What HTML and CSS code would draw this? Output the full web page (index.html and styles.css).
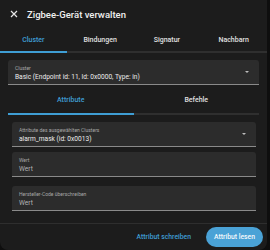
FILE: index.html
```html
<!DOCTYPE html>
<html lang="de">
<head>
    <meta charset="UTF-8">
    <meta name="viewport" content="width=device-width, initial-scale=1.0">
    <title>Zigbee-Gerät verwalten</title>
    <link rel="stylesheet" href="styles.css">
</head>
<body>
    <div class="dialog">
        <div class="kopf">
            <svg class="schliessen" width="8" height="8" viewBox="0 0 8 8">
                <path d="M1 1L7 7M7 1L1 7" stroke="#e6e6e6" stroke-width="1.2" fill="none"/>
            </svg>
            <span class="titel">Zigbee-Gerät verwalten</span>
        </div>
        <div class="tabs">
            <div class="tab aktiv">Cluster</div>
            <div class="tab">Bindungen</div>
            <div class="tab">Signatur</div>
            <div class="tab">Nachbarn</div>
        </div>
        <div class="inhalt">
            <div class="feld auswahl">
                <div class="label">Cluster</div>
                <div class="wert">Basic (Endpoint id: 11, Id: 0x0000, Type: in)</div>
                <span class="pfeil"></span>
            </div>
            <div class="tabs unter">
                <div class="tab aktiv">Attribute</div>
                <div class="tab">Befehle</div>
            </div>
            <div class="felder">
                <div class="feld auswahl">
                    <div class="label">Attribute des ausgewählten Clusters</div>
                    <div class="wert">alarm_mask (id: 0x0013)</div>
                    <span class="pfeil"></span>
                </div>
                <div class="feld">
                    <div class="label">Wert</div>
                    <div class="wert leer">Wert</div>
                </div>
                <div class="feld">
                    <div class="label">Hersteller-Code überschreiben</div>
                    <div class="wert leer">Wert</div>
                </div>
            </div>
        </div>
        <div class="aktionen">
            <button class="knopf text">Attribut schreiben</button>
            <button class="knopf voll">Attribut lesen</button>
        </div>
    </div>
</body>
</html>
```

FILE: styles.css
```css
body {
    margin: 0;
    background-color: #0e0e0e;
    font-family: Roboto, "Liberation Sans", sans-serif;
}
.dialog {
    width: 267px;
    height: 250px;
    background-color: #1c1c1c;
    border-radius: 0 0 8px 8px;
    display: flex;
    flex-direction: column;
}
.kopf {
    height: 28px;
    display: flex;
    align-items: center;
    padding: 0 0 0 10px;
}
.schliessen {
    margin-right: 9px;
}
.titel {
    color: #f0f0f0;
    font-size: 9.5px;
    font-weight: 500;
    padding-top: 1px;
}
.tabs {
    display: flex;
    height: 23px;
    border-bottom: 2px solid #2f2f2f;
}
.tab {
    flex: 1;
    display: flex;
    align-items: center;
    justify-content: center;
    font-size: 7px;
    font-weight: 500;
    color: #e0e0e0;
    margin-bottom: -2px;
    border-bottom: 2px solid transparent;
}
.tab.aktiv {
    color: #3f9ed4;
    border-bottom-color: #3f9ed4;
}
.inhalt {
    padding: 7px 8px 0 8px;
}
.feld {
    position: relative;
    height: 25px;
    background-color: #2c2c2c;
    border-radius: 3px 3px 0 0;
    border-bottom: 1px solid #8a8a8a;
    padding: 5px 0 0 7px;
    box-sizing: border-box;
}
.label {
    font-size: 5px;
    color: #a8a8a8;
    line-height: 7px;
}
.wert {
    font-size: 6.6px;
    color: #ececec;
    line-height: 10px;
}
.wert.leer {
    color: #b4b4b4;
}
.pfeil {
    position: absolute;
    right: 10px;
    top: 11px;
    border-left: 2px solid transparent;
    border-right: 2px solid transparent;
    border-top: 2px solid #bdbdbd;
}
.tabs.unter {
    height: 26px;
    margin-top: 2px;
}
.felder {
    padding: 7px 3px 0 4px;
    display: flex;
    flex-direction: column;
    gap: 5px;
}
.felder .feld:last-child {
    margin-top: 4px;
}
.aktionen {
    margin-top: auto;
    border-top: 1px solid #2e2e2e;
    height: 25px;
    display: flex;
    align-items: center;
    justify-content: flex-end;
    padding: 0 4px 1px 0;
    gap: 11px;
}
.knopf {
    font-family: Roboto, "Liberation Sans", sans-serif;
    font-size: 6.8px;
    font-weight: 500;
    border: none;
    background: none;
    cursor: pointer;
}
.knopf.text {
    color: #3f9ed4;
    padding: 0 4px;
}
.knopf.voll {
    background-color: #4aa2d6;
    color: #f4f9fc;
    border-radius: 10px;
    height: 20px;
    padding: 0 8px;
}
```
